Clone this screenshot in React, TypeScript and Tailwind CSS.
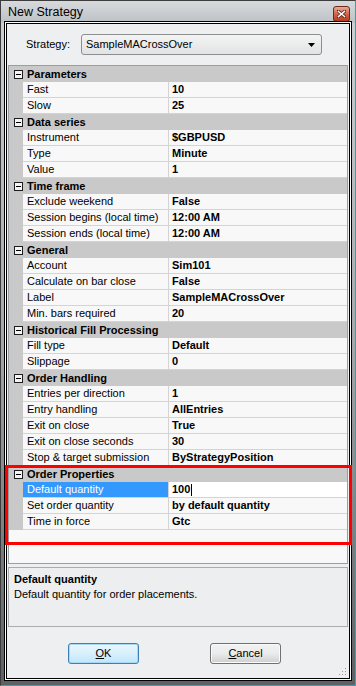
import React from 'react';

type Section = { title: string; rows: [string, string][] };

const sections: Section[] = [
  { title: 'Parameters', rows: [['Fast', '10'], ['Slow', '25']] },
  { title: 'Data series', rows: [['Instrument', '$GBPUSD'], ['Type', 'Minute'], ['Value', '1']] },
  {
    title: 'Time frame',
    rows: [
      ['Exclude weekend', 'False'],
      ['Session begins (local time)', '12:00 AM'],
      ['Session ends (local time)', '12:00 AM'],
    ],
  },
  {
    title: 'General',
    rows: [
      ['Account', 'Sim101'],
      ['Calculate on bar close', 'False'],
      ['Label', 'SampleMACrossOver'],
      ['Min. bars required', '20'],
    ],
  },
  { title: 'Historical Fill Processing', rows: [['Fill type', 'Default'], ['Slippage', '0']] },
  {
    title: 'Order Handling',
    rows: [
      ['Entries per direction', '1'],
      ['Entry handling', 'AllEntries'],
      ['Exit on close', 'True'],
      ['Exit on close seconds', '30'],
      ['Stop & target submission', 'ByStrategyPosition'],
    ],
  },
  {
    title: 'Order Properties',
    rows: [
      ['Default quantity', '100'],
      ['Set order quantity', 'by default quantity'],
      ['Time in force', 'Gtc'],
    ],
  },
];

function Minus() {
  return (
    <div className="w-[9px] h-[9px] border border-[#1e1e1e] bg-[#f4f4f4] flex items-center justify-center">
      <div className="w-[5px] h-[1px] bg-black" />
    </div>
  );
}

function HeaderRow({ title }: { title: string }) {
  return (
    <div className="h-[16px] flex items-center bg-[#c9c9c9]">
      <div className="w-[18px] flex justify-center pl-[1px]">
        <Minus />
      </div>
      <span className="font-bold text-black leading-none">{title}</span>
    </div>
  );
}

function DataRow({ label, value, selected }: { label: string; value: string; selected?: boolean }) {
  return (
    <div className="h-[16px] flex bg-[#c9c9c9]">
      <div className="w-[14px]" />
      <div
        className={`w-[146px] h-full pl-[4px] flex items-center border-b border-r border-[#d4d4d4] ${
          selected ? 'bg-[#3399ff] text-white' : 'bg-[#f8f8f8] text-black'
        }`}
      >
        <span className="leading-none whitespace-nowrap">{label}</span>
      </div>
      <div
        className={`flex-1 h-full pl-[3px] flex items-center border-b border-[#d4d4d4] ${
          selected ? 'bg-white' : 'bg-[#f8f8f8]'
        }`}
      >
        <span className="font-bold leading-none whitespace-nowrap">{value}</span>
        {selected && <span className="w-[1px] h-[12px] bg-black ml-[1px]" />}
      </div>
    </div>
  );
}

export default function App() {
  return (
    <div className="w-[356px] h-[686px] relative overflow-hidden font-['Liberation_Sans',Arial,sans-serif] text-[11px] text-black bg-gradient-to-b from-[#cfd2d5] via-[#a4a8ac] to-[#5e6164] border border-[#3c3c3c] border-r-[#2aa3c4] border-b-[#2aa3c4]">
      {/* title bar */}
      <div className="h-[22px] flex items-center pl-[7px] bg-gradient-to-b from-[#d7dadd] to-[#bdc1c5]">
        <span className="text-[12.5px] text-black">New Strategy</span>
      </div>
      <div className="absolute top-[5px] right-[5px] w-[17px] h-[16px] rounded-[3px] border border-[#6b2a1c] bg-gradient-to-b from-[#e9ab98] via-[#d0644a] to-[#b8391f] flex items-center justify-center">
        <svg width="9" height="8" viewBox="0 0 9 8">
          <path d="M1 1 L8 7 M8 1 L1 7" stroke="#5a1a10" strokeWidth="3" strokeLinecap="square" />
          <path d="M1.5 1.5 L7.5 6.5 M7.5 1.5 L1.5 6.5" stroke="#fff" strokeWidth="1.6" strokeLinecap="square" />
        </svg>
      </div>

      {/* client area */}
      <div className="mx-[5px] h-[656px] border border-black shadow-[0_0_0_1px_#fff,0_0_0_2px_#000] bg-[#eeeff0] relative">
        <div className="flex items-center pt-[10px] pl-[19px]">
          <span className="w-[55px]">Strategy:</span>
          <div className="w-[241px] h-[21px] rounded-[3px] border border-[#8c8e90] bg-gradient-to-b from-[#f4f4f4] to-[#e2e3e4] flex items-center pl-[4px] pr-[6px]">
            <span className="flex-1">SampleMACrossOver</span>
            <svg width="7" height="4" viewBox="0 0 7 4">
              <path d="M0 0 H7 L3.5 4 Z" fill="#000" />
            </svg>
          </div>
        </div>

        {/* property grid */}
        <div className="mt-[10px] mx-[1px] h-[499px] border border-[#9a9ea3] bg-[#f8f8f8]">
          {sections.map(s => (
            <div key={s.title}>
              <HeaderRow title={s.title} />
              {s.rows.map(([l, v]) => (
                <DataRow key={l} label={l} value={v} selected={l === 'Default quantity'} />
              ))}
            </div>
          ))}
        </div>

        {/* description */}
        <div className="mt-[3px] mx-[1px] h-[60px] border border-[#a9acb0] bg-[#eceeef] px-[5px] pt-[4px]">
          <div className="font-bold leading-[14px]">Default quantity</div>
          <div className="leading-[14px] mt-[1px]">Default quantity for order placements.</div>
        </div>

        {/* buttons */}
        <div className="mt-[16px] flex pl-[61px] gap-[71px]">
          <button className="w-[71px] h-[21px] rounded-[3px] border border-[#3c7fb1] bg-gradient-to-b from-[#eaf6fd] via-[#d9f0fc] to-[#bee6fd] shadow-[inset_0_0_0_1px_#a7d9f5] text-[11px]">
            <span className="underline">O</span>K
          </button>
          <button className="w-[71px] h-[21px] rounded-[3px] border border-[#707070] bg-gradient-to-b from-[#f2f2f2] via-[#ebebeb] to-[#cfcfcf] shadow-[inset_0_0_0_1px_#fbfbfb] text-[11px]">
            <span className="underline">C</span>ancel
          </button>
        </div>

        {/* resize grip */}
        <svg className="absolute right-[2px] bottom-[2px]" width="8" height="8" viewBox="0 0 8 8">
          <g fill="#9a9a9a">
            <rect x="6" y="0" width="1" height="1" />
            <rect x="3" y="3" width="1" height="1" />
            <rect x="6" y="3" width="1" height="1" />
            <rect x="0" y="6" width="1" height="1" />
            <rect x="3" y="6" width="1" height="1" />
            <rect x="6" y="6" width="1" height="1" />
          </g>
        </svg>
      </div>

      {/* red highlight */}
      <div className="absolute left-[4px] top-[464px] w-[347px] h-[80px] border-[3px] border-[#ff0000] pointer-events-none" />
    </div>
  );
}
